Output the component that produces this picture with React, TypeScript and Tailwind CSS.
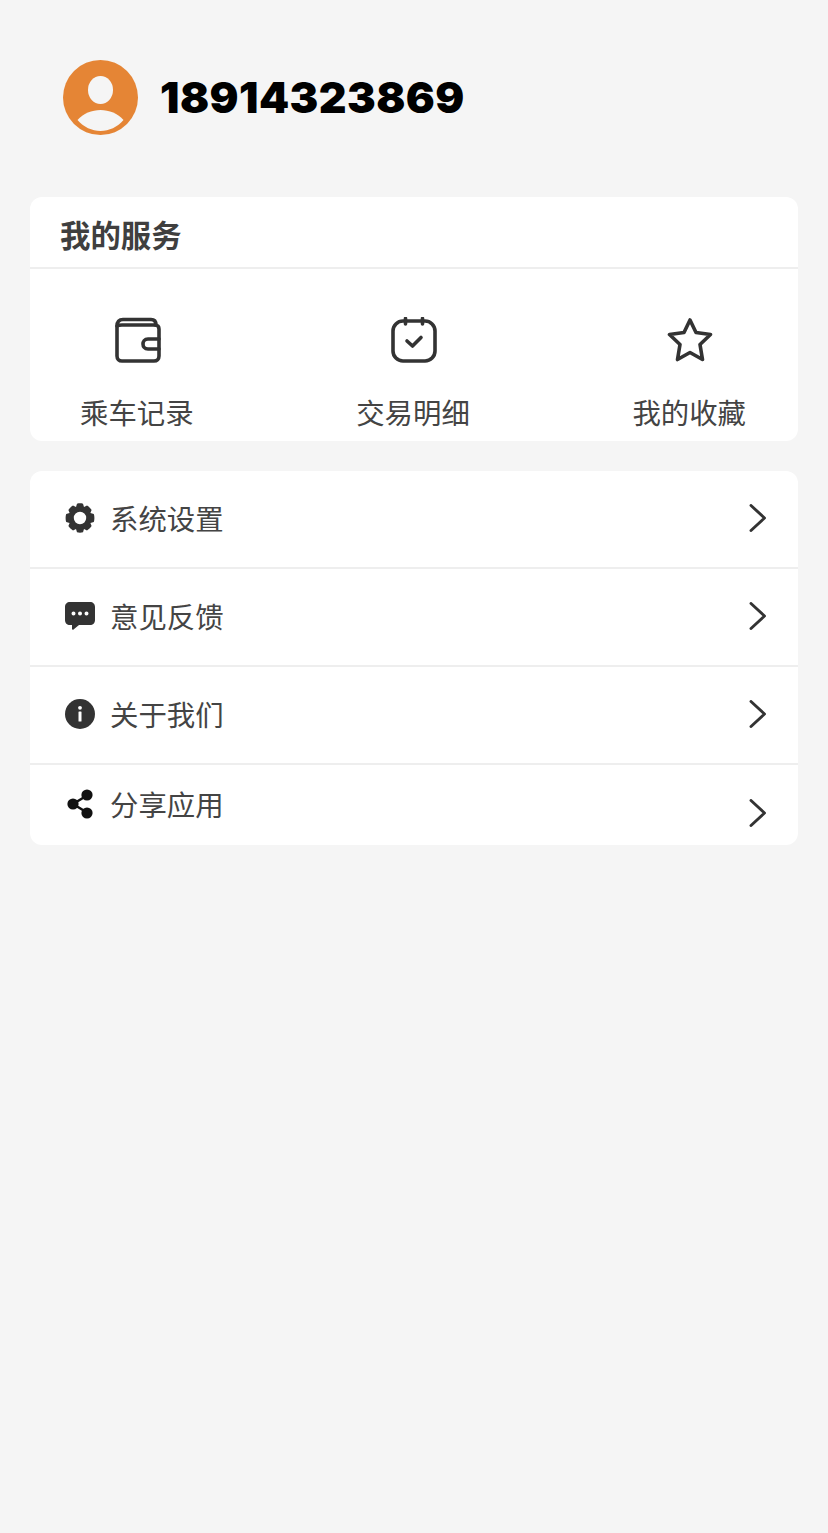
import React from "react";

const cjk = "font-['Noto_Sans_CJK_SC','Noto_Sans',sans-serif]";

function Chevron({ className = "" }: { className?: string }) {
  return (
    <svg width="18" height="28" viewBox="0 0 18 28" fill="none" className={className}>
      <path d="M2 1.5 L15.5 14 L2 26.5" stroke="#333" strokeWidth="2.9" strokeLinecap="round" strokeLinejoin="round" />
    </svg>
  );
}

function Avatar() {
  return (
    <svg width="75" height="75" viewBox="0 0 75 75" className="shrink-0">
      <circle cx="37.5" cy="37.5" r="37.5" fill="#e58535" />
      <ellipse cx="37.5" cy="30" rx="12.5" ry="14" fill="#f5f5f5" />
      <path d="M14.5 60 C20 53.5 29 50 37.5 50 C46 50 55 53.5 60.5 60 C54.5 67 46 71 37.5 71 C29 71 20.5 67 14.5 60 Z" fill="#f5f5f5" />
    </svg>
  );
}

function Wallet() {
  return (
    <svg width="46" height="46" viewBox="0 0 46 46" fill="none" stroke="#333" strokeWidth="3.6" strokeLinejoin="round" strokeLinecap="round">
      <path d="M2 9 C2 5 4 2.5 8 2.5 H36 C39 2.5 41 4.5 41 8 H7 C4 8 2 9 2 9 Z" />
      <path d="M2 9 V39 C2 42 4 44 7 44 H39 C42 44 44 42 44 39 V12 C44 9.5 42.5 8 40 8" />
      <path d="M44 22 H33 C29.5 22 28 24.5 28 27 C28 29.5 29.5 32 33 32 H44" />
    </svg>
  );
}

function CalendarCheck() {
  return (
    <svg width="46" height="46" viewBox="0 0 46 46" fill="none" stroke="#333" strokeLinecap="round" strokeLinejoin="round">
      <rect x="2" y="4" width="42" height="40" rx="10" strokeWidth="3.6" />
      <path d="M14.5 1.5 V7 M31.5 1.5 V7" strokeWidth="3.6" />
      <path d="M16 24 L21.5 29 L30 20.5" strokeWidth="3.6" />
    </svg>
  );
}

function Star() {
  return (
    <svg width="46" height="44" viewBox="0 0 46 44" fill="none" stroke="#333" strokeWidth="3.6" strokeLinejoin="round">
      <path d="M23 2 L29 14.5 L43.5 16.5 L33 26.5 L35.5 41.5 L23 34.5 L10.5 41.5 L13 26.5 L2.5 16.5 L17 14.5 Z" />
    </svg>
  );
}

function Gear() {
  return (
    <svg width="30" height="30" viewBox="0 0 30 30">
      <path
        fill="#333"
        fillRule="evenodd"
        d="M12 .8 C13.8 .2 16.2 .2 18 .8 L19 4 L22 2.6 C23.6 3.4 25.6 5.4 26.6 7 L25.4 10 L28.8 11 C29.6 13 29.6 17 28.8 19 L25.4 20 L26.6 23 C25.6 24.6 23.6 26.6 22 27.4 L19 26 L18 29.2 C16.2 29.8 13.8 29.8 12 29.2 L11 26 L8 27.4 C6.4 26.6 4.4 24.6 3.4 23 L4.6 20 L1.2 19 C.4 17 .4 13 1.2 11 L4.6 10 L3.4 7 C4.4 5.4 6.4 3.4 8 2.6 L11 4 Z M15 8.8 A6.2 6.2 0 1 0 15 21.2 A6.2 6.2 0 1 0 15 8.8 Z"
      />
    </svg>
  );
}

function Chat() {
  return (
    <svg width="30" height="30" viewBox="0 0 30 30">
      <path
        fill="#333"
        fillRule="evenodd"
        d="M5 1 H25 C28 1 30 3 30 6 V19 C30 22 28 24 25 24 H14 L8.5 28.5 C8 29 7 28.7 7 28 V24 H5 C2 24 0 22 0 19 V6 C0 3 2 1 5 1 Z M8.5 10.5 A2 2 0 1 0 8.5 14.5 A2 2 0 1 0 8.5 10.5 Z M15 10.5 A2 2 0 1 0 15 14.5 A2 2 0 1 0 15 10.5 Z M21.5 10.5 A2 2 0 1 0 21.5 14.5 A2 2 0 1 0 21.5 10.5 Z"
      />
    </svg>
  );
}

function Info() {
  return (
    <svg width="30" height="30" viewBox="0 0 30 30">
      <circle cx="15" cy="15" r="15" fill="#333" />
      <circle cx="15" cy="8.8" r="1.9" fill="#fff" />
      <rect x="13.5" y="12.5" width="3" height="10" rx="0.6" fill="#fff" />
    </svg>
  );
}

function Share() {
  return (
    <svg width="30" height="30" viewBox="0 0 30 30" fill="#111">
      <path d="M8 15 L22 6.5 M8 15 L22 23.5" stroke="#111" strokeWidth="2.6" />
      <circle cx="8" cy="15" r="5.6" />
      <circle cx="22" cy="6" r="5.6" />
      <circle cx="22" cy="24" r="5.6" />
    </svg>
  );
}

function Service({ icon, label }: { icon: React.ReactNode; label: string }) {
  return (
    <div className="flex flex-col items-center">
      <div className="flex h-[46px] translate-x-[1px] items-center justify-center">{icon}</div>
      <span className="mt-[29px] text-[28.4px] leading-[40px] text-[#444444]">{label}</span>
    </div>
  );
}

function Row({ icon, label, last = false }: { icon: React.ReactNode; label: string; last?: boolean }) {
  return (
    <div className={`flex px-[35px] ${last ? "h-[80px] items-start pt-[19px]" : "h-[98px] items-center border-b-2 border-[#eeeeee] pb-[2px]"}`}>
      <div className={`shrink-0 ${last ? "mt-[5px]" : ""}`}>{icon}</div>
      <span className="ml-[15px] flex-1 text-[28.4px] leading-[40px] text-[#444444]">{label}</span>
      <Chevron className={last ? "mr-[-4px] mt-[15px]" : "mr-[-4px]"} />
    </div>
  );
}

export default function App() {
  return (
    <div className={`min-h-[1533px] bg-[#f5f5f5] px-[30px] pt-[60px] ${cjk}`}>
      <div className="flex items-center pl-[33px]">
        <Avatar />
        <span className="ml-[22px] font-['Inter',sans-serif] text-[43px] font-black leading-[75px] tracking-[0.45px] text-black">18914323869</span>
      </div>

      <section className="mt-[62px] h-[244px] rounded-[12px] bg-white">
        <div className="flex h-[72px] items-center border-b-2 border-[#eeeeee] pl-[30px]">
          <h2 className="mt-[3px] text-[30.4px] font-bold leading-[40px] text-[#3f3f3f]">我的服务</h2>
        </div>
        <div className="flex justify-between pl-[50px] pr-[52px] pt-[48px]">
          <Service icon={<Wallet />} label="乘车记录" />
          <Service icon={<CalendarCheck />} label="交易明细" />
          <Service icon={<Star />} label="我的收藏" />
        </div>
      </section>

      <section className="mt-[30px] h-[374px] overflow-hidden rounded-[12px] bg-white">
        <Row icon={<Gear />} label="系统设置" />
        <Row icon={<Chat />} label="意见反馈" />
        <Row icon={<Info />} label="关于我们" />
        <Row icon={<Share />} label="分享应用" last />
      </section>
    </div>
  );
}
